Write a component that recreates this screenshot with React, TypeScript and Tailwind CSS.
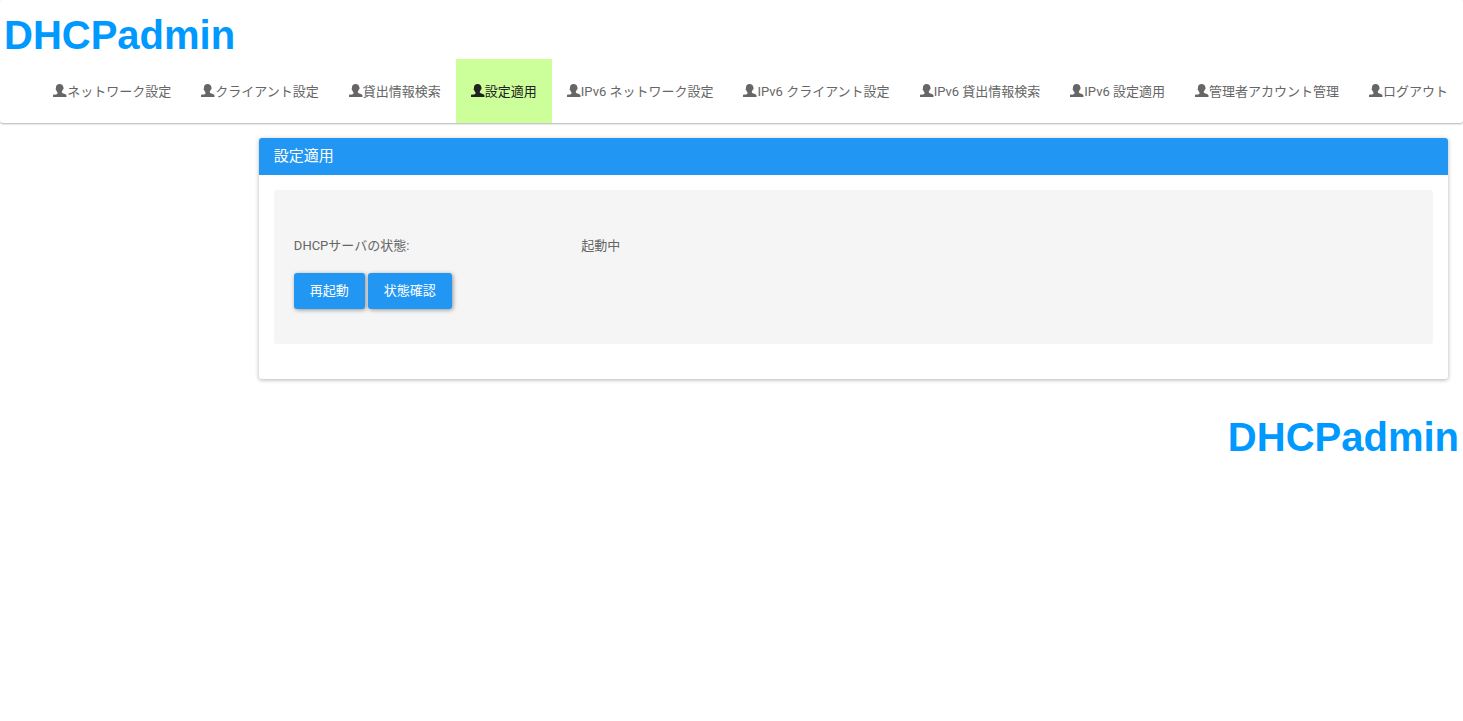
import { useState } from 'react';

interface MenuItem {
  id: string;
  label: string;
}

const MENU: MenuItem[] = [
  { id: 'network', label: 'ネットワーク設定' },
  { id: 'client', label: 'クライアント設定' },
  { id: 'lease', label: '貸出情報検索' },
  { id: 'apply', label: '設定適用' },
  { id: 'network6', label: 'IPv6 ネットワーク設定' },
  { id: 'client6', label: 'IPv6 クライアント設定' },
  { id: 'lease6', label: 'IPv6 貸出情報検索' },
  { id: 'apply6', label: 'IPv6 設定適用' },
  { id: 'account', label: '管理者アカウント管理' },
  { id: 'logout', label: 'ログアウト' },
];

function UserIcon() {
  return (
    <svg viewBox="0 0 14 17" className="h-[17px] w-[14px] shrink-0" fill="currentColor" aria-hidden="true">
      <path d="M6.500 0C4.300 0 3 1.300 3 3.200v1.100c-.4.2-.4.7-.3 1.200.1.500.3.900.7 1 .2.800.6 1.500 1.100 2v1c-.4.600-1.400.900-2.500 1.300C.7 10.300 0 10.800 0 11.700V13h13.500v-1.300c0-.9-.9-1.400-2.200-1.900-1.200-.4-2.200-.8-2.500-1.300v-1c.5-.4.900-1.100 1.100-1.900.4-.1.600-.6.7-1.100.1-.5.100-1-.3-1.200V3.200C10.300 1.300 8.900 0 6.500 0z" />
    </svg>
  );
}

function Logo() {
  return (
    <span className="font-['Liberation_Sans',sans-serif] text-[40px] leading-[46px] font-bold text-[#0099ff]">
      DHCPadmin
    </span>
  );
}

function ActionButton({ children }: { children: string }) {
  return (
    <button
      type="button"
      className="h-9 cursor-pointer rounded-[3px] bg-[#2196f3] px-4 leading-[22px] text-white shadow-[1px_1px_4px_rgba(0,0,0,0.4)] hover:bg-[#0d87e9]"
    >
      {children}
    </button>
  );
}

export default function App() {
  const [current, setCurrent] = useState('apply');

  return (
    <div className="min-h-screen bg-white font-['Roboto','Noto_Sans_CJK_JP',sans-serif] text-[13px] leading-[22px] text-[#666666]">
      {/* ヘッダー */}
      <header className="rounded-[3px] shadow-[0_1px_2px_rgba(0,0,0,0.3)]">
        <div className="flex h-[59px] items-end px-1 pb-px">
          <Logo />
        </div>
        <nav>
          <ul className="flex justify-end">
            {MENU.map(item => (
              <li key={item.id}>
                <a
                  href={`#${item.id}`}
                  onClick={() => setCurrent(item.id)}
                  className={`flex h-16 items-center px-[15px] pt-[2px] whitespace-nowrap ${
                    item.id === current ? 'bg-[#ccff99] text-[#212121]' : 'hover:text-[#212121]'
                  }`}
                >
                  <UserIcon />
                  {item.label}
                </a>
              </li>
            ))}
          </ul>
        </nav>
      </header>

      {/* メイン */}
      <main className="ml-auto w-10/12 px-[15px] pt-[15px]">
        <section className="rounded-[3px] bg-white shadow-[0_1px_4px_rgba(0,0,0,0.3)]">
          <h1 className="rounded-t-[3px] bg-[#2196f3] px-[15px] py-[10px] text-[15px] leading-[17px] text-white">
            設定適用
          </h1>
          <div className="px-[15px] pt-[15px] pb-[35px]">
            <div className="rounded-[3px] bg-[#f5f5f5] px-5 pt-[45px] pb-[35px]">
              <dl className="-mx-[15px] mb-4 flex">
                <dt className="w-3/12 px-[15px]">DHCPサーバの状態:</dt>
                <dd className="px-[15px]">起動中</dd>
              </dl>
              <div className="flex gap-[3px]">
                <ActionButton>再起動</ActionButton>
                <ActionButton>状態確認</ActionButton>
              </div>
            </div>
          </div>
        </section>
      </main>

      {/* フッター */}
      <footer className="flex justify-end px-1 pt-[35px]">
        <Logo />
      </footer>
    </div>
  );
}
